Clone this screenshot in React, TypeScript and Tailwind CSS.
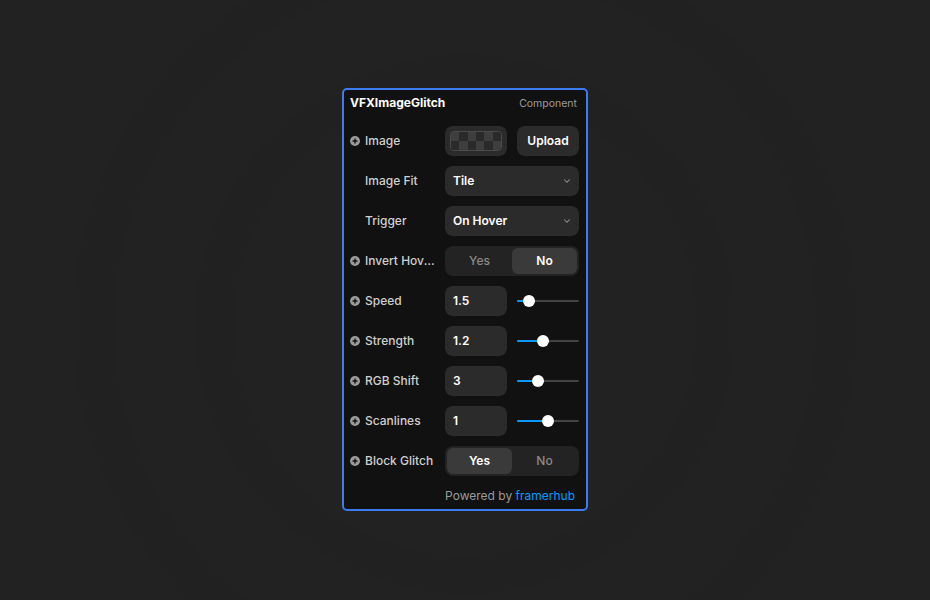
import { ChevronDown } from 'lucide-react';

const font = { fontFamily: 'Inter, "Liberation Sans", sans-serif' };

function PlusDot() {
  return (
    <svg width="10" height="10" viewBox="0 0 10 10" className="shrink-0">
      <circle cx="5" cy="5" r="5" fill="#9a9a9a" />
      <path d="M5 2.6v4.8M2.6 5h4.8" stroke="#111" strokeWidth="1.4" />
    </svg>
  );
}

function Row({ label, icon = true, children }: { label: string; icon?: boolean; children: React.ReactNode }) {
  return (
    <div className="flex h-[30px] items-center">
      <div className="flex w-[95px] items-center gap-[5px]">
        {icon ? <PlusDot /> : <span className="w-[10px]" />}
        <span className="max-w-[70px] truncate text-[12px] font-medium text-[#cfcfcf]">{label}</span>
      </div>
      <div className="flex h-full w-[134px] gap-[10px]">{children}</div>
    </div>
  );
}

function Select({ value }: { value: string }) {
  return (
    <div className="flex h-full w-full items-center justify-between rounded-lg bg-[#2b2b2b] pl-[8px] pr-[7px]">
      <span className="text-[12px] font-semibold text-white">{value}</span>
      <ChevronDown size={10} strokeWidth={2.5} color="#9a9a9a" />
    </div>
  );
}

function Segmented({ active }: { active: 'Yes' | 'No' }) {
  return (
    <div className="flex h-full w-full rounded-lg bg-[#232323] p-[2px]">
      {(['Yes', 'No'] as const).map((opt) => (
        <div
          key={opt}
          className={`flex flex-1 items-center justify-center rounded-md text-[12px] ${
            opt === active ? 'bg-[#3a3a3a] font-semibold text-white' : 'font-medium text-[#8a8a8a]'
          }`}
        >
          {opt}
        </div>
      ))}
    </div>
  );
}

function NumberSlider({ value, pct }: { value: string; pct: number }) {
  return (
    <>
      <div className="flex h-full w-[62px] items-center rounded-lg bg-[#2b2b2b] pl-[8px] text-[12px] font-semibold text-white">
        {value}
      </div>
      <div className="relative flex flex-1 items-center">
        <div className="h-[2px] w-full rounded-full bg-[#444]" />
        <div className="absolute left-0 h-[2px] rounded-full bg-[#0a99ff]" style={{ width: `${pct}%` }} />
        <div
          className="absolute h-[12px] w-[12px] -translate-x-1/2 rounded-full bg-white"
          style={{ left: `${pct}%` }}
        />
      </div>
    </>
  );
}

function Checker() {
  const cells = Array.from({ length: 12 });
  return (
    <div className="flex h-full w-[62px] items-center justify-center rounded-lg bg-[#2b2b2b]">
      <div className="grid h-[20px] w-[52px] grid-cols-6 grid-rows-2 overflow-hidden rounded-[4px] border border-[#4a4a4a]">
        {cells.map((_, i) => {
          const dark = (Math.floor(i / 6) + (i % 6)) % 2 === 1;
          return <div key={i} className={dark ? 'bg-[#2a2a2a]' : 'bg-[#3e3e3e]'} />;
        })}
      </div>
    </div>
  );
}

export default function App() {
  return (
    <div
      className="flex h-[600px] w-[930px] items-start justify-center bg-[radial-gradient(circle_at_50%_54%,#222222_0px,#222222_230px,#212121_231px,#212121_270px,#222222_271px,#222222_350px,#212121_351px,#212121_392px,#222222_393px)] pt-[88px]"
      style={font}
    >
      <div className="flex w-[246px] flex-col rounded-[5px] border-2 border-[#3b7cf0] bg-[#111111] pl-[6px] pr-[7px] pt-[5px] pb-[5px]">
        <div className="flex h-[16px] items-center justify-between">
          <span className="text-[12px] font-bold text-white">VFXImageGlitch</span>
          <span className="pr-[2px] pt-[2px] text-[10.5px] text-[#9a9a9a]">Component</span>
        </div>

        <div className="mt-[15px] flex flex-col gap-[10px]">
          <Row label="Image">
            <Checker />
            <div className="flex h-full w-[62px] items-center justify-center rounded-lg bg-[#2b2b2b] text-[12px] font-semibold text-white">
              Upload
            </div>
          </Row>
          <Row label="Image Fit" icon={false}>
            <Select value="Tile" />
          </Row>
          <Row label="Trigger" icon={false}>
            <Select value="On Hover" />
          </Row>
          <Row label="Invert Hover">
            <Segmented active="No" />
          </Row>
          <Row label="Speed">
            <NumberSlider value="1.5" pct={19} />
          </Row>
          <Row label="Strength">
            <NumberSlider value="1.2" pct={42} />
          </Row>
          <Row label="RGB Shift">
            <NumberSlider value="3" pct={34} />
          </Row>
          <Row label="Scanlines">
            <NumberSlider value="1" pct={50} />
          </Row>
          <Row label="Block Glitch">
            <Segmented active="Yes" />
          </Row>
        </div>

        <div className="mt-[12px] h-[16px] pr-[4px] text-right text-[12px] leading-[16px] text-[#9a9a9a]">
          Powered by <span className="text-[#0a99ff]">framerhub</span>
        </div>
      </div>
    </div>
  );
}
